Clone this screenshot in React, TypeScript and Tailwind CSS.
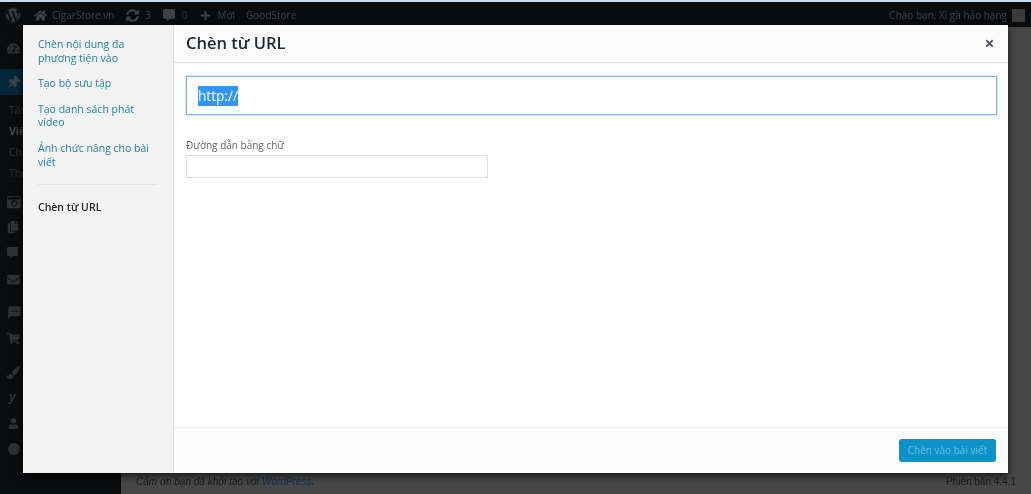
import { FaWordpress, FaHome, FaPlus, FaTachometerAlt, FaThumbtack, FaCopy, FaCommentAlt, FaEnvelope, FaUser, FaPaintBrush, FaTimes, FaShoppingCart, FaSyncAlt, FaCameraRetro } from 'react-icons/fa';
import { MdSms } from 'react-icons/md';

const font = { fontFamily: '"Open Sans", sans-serif' };

function AdminBar() {
  return (
    <div className="h-[24px] shrink-0 bg-[#0a0b0c] flex items-center text-[10px] text-[#3f4244]">
      <FaWordpress className="w-[16px] h-[16px] ml-[5px] text-[#3c3f41]" />
      <FaHome className="w-[13px] h-[13px] ml-[13px]" />
      <span className="ml-[5px] w-[62px]">CigarStore.vn</span>
      <FaSyncAlt className="w-[13px] h-[13px] ml-[12px]" />
      <span className="ml-[6px]">3</span>
      <FaCommentAlt className="w-[12px] h-[12px] ml-[12px]" />
      <span className="ml-[7px] text-[#2f3133]">0</span>
      <FaPlus className="w-[11px] h-[11px] ml-[13px]" />
      <span className="ml-[6px]">Mới</span>
      <span className="ml-[11px]">GoodStore</span>
      <span className="ml-auto mr-[5px]">Chào bạn, Xì gà hảo hạng</span>
      <span className="w-[13px] h-[13px] mr-[6px] bg-[#3a3a3a]" />
    </div>
  );
}

function SideIcon({ children, className = '' }: { children: React.ReactNode; className?: string }) {
  return <div className={`pl-[7px] h-[14px] flex items-center text-[#2e3033] ${className}`}>{children}</div>;
}

function AdminMenu() {
  return (
    <div className="w-[121px] shrink-0 bg-[#0b0c0e] text-[10.500px] text-[#303336]">
      <SideIcon className="mt-[14px]"><FaTachometerAlt className="w-[13px] h-[13px]" /></SideIcon>
      <div className="mt-[14px] h-[26px] bg-[#03263a] flex items-center pl-[7px] text-[#3d4245]">
        <FaThumbtack className="w-[13px] h-[13px] rotate-45" />
      </div>
      <div className="mt-[8px] flex flex-col gap-[7px] pl-[9px] leading-[14px] whitespace-nowrap">
        <span>Tất</span>
        <span className="font-bold text-[#45484b]">Viết</span>
        <span>Ch</span>
        <span>Thẻ</span>
      </div>
      <SideIcon className="mt-[15px]"><FaCameraRetro className="w-[14px] h-[14px]" /></SideIcon>
      <SideIcon className="mt-[11px]"><FaCopy className="w-[12px] h-[12px]" /></SideIcon>
      <SideIcon className="mt-[11px]"><FaCommentAlt className="w-[11px] h-[11px]" /></SideIcon>
      <SideIcon className="mt-[13px]"><FaEnvelope className="w-[13px] h-[13px]" /></SideIcon>
      <SideIcon className="mt-[19px]"><MdSms className="w-[15px] h-[15px]" /></SideIcon>
      <SideIcon className="mt-[12px]"><FaShoppingCart className="w-[13px] h-[13px]" /></SideIcon>
      <SideIcon className="mt-[20px]"><FaPaintBrush className="w-[13px] h-[13px]" /></SideIcon>
      <SideIcon className="mt-[11px] pl-[9px] font-bold italic text-[13px]">y</SideIcon>
      <SideIcon className="mt-[12px]"><FaUser className="w-[11px] h-[11px] ml-[1px]" /></SideIcon>
      <SideIcon className="mt-[12px]">
        <span className="w-[12px] h-[12px] ml-[1px] rounded-full bg-[#2e3033]" />
      </SideIcon>
    </div>
  );
}

function Modal() {
  const links = [
    'Chèn nội dung đa phương tiện vào',
    'Tạo bộ sưu tập',
    'Tạo danh sách phát video',
    'Ảnh chức năng cho bài viết',
  ];
  return (
    <div className="absolute left-[23px] top-[25px] w-[985px] h-[448px] flex bg-white shadow-[0_3px_8px_rgba(0,0,0,0.7)]">
      <div className="w-[151px] shrink-0 bg-[#f3f3f3] border-r border-[#dddddd] pl-[15px] pr-[15px] pt-[13px]">
        <div className="flex flex-col gap-[12px] text-[10.500px] leading-[13.600px] text-[#1f80ad]">
          {links.map((label) => (
            <a key={label}>{label}</a>
          ))}
        </div>
        <div className="mt-[15px] h-px bg-[#e4e4e4]" />
        <div className="mt-[15px] text-[10.500px] leading-[14px] font-semibold text-[#23282d]">Chèn từ URL</div>
      </div>
      <div className="flex-1 flex flex-col min-w-0">
        <div className="h-[38px] shrink-0 bg-[#fcfcfc] border-b border-[#dddddd] flex items-center justify-between pl-[12px] pr-[13px]">
          <h1 className="text-[16.500px] font-semibold text-[#23282d]">Chèn từ URL</h1>
          <FaTimes className="w-[11px] h-[11px] text-[#555d66]" />
        </div>
        <div className="flex-1 pl-[12px] pr-[11px] pt-[13px]">
          <div className="h-[39px] bg-white border border-[#7db8e8] shadow-[0_0_2px_rgba(30,140,190,0.6)] flex items-center px-[11px]">
            <span className="text-[13.600px] leading-[20px] bg-[#3297fd] text-white">http://</span>
          </div>
          <div className="mt-[23px] text-[10px] leading-[14px] text-[#666666]">Đường dẫn bằng chữ</div>
          <div className="mt-[3px] w-[302px] h-[23px] bg-white border border-[#dddddd]" />
        </div>
        <div className="h-[46px] shrink-0 bg-[#fcfcfc] border-t border-[#eeeeee] flex items-center justify-end pr-[12px]">
          <button className="h-[23px] w-[97px] rounded-[3px] bg-[#0d93c9] text-[10px] text-[#66c0de]">
            Chèn vào bài viết
          </button>
        </div>
      </div>
    </div>
  );
}

export default function App() {
  return (
    <div className="relative w-[1031px] h-[494px] overflow-hidden flex flex-col bg-[#474747] blur-[0.4px]" style={font}>
      <div className="h-[3px] shrink-0 bg-[#c9dbe8] border-b border-[#0a0b0c]" />
      <AdminBar />
      <div className="flex-1 flex min-h-0">
        <AdminMenu />
        <div className="flex-1 flex flex-col justify-end">
          <div className="h-[25px] flex items-center justify-between pl-[15px] pr-[15px] text-[10px] italic text-[#1a1c1e]" style={{ fontFamily: '"Liberation Sans", sans-serif' }}>
            <span>Cảm ơn bạn đã khởi tạo với <span className="text-[#0f3345]">WordPress</span>.</span>
            <span className="not-italic">Phiên bản 4.4.1</span>
          </div>
        </div>
      </div>
      <Modal />
    </div>
  );
}
